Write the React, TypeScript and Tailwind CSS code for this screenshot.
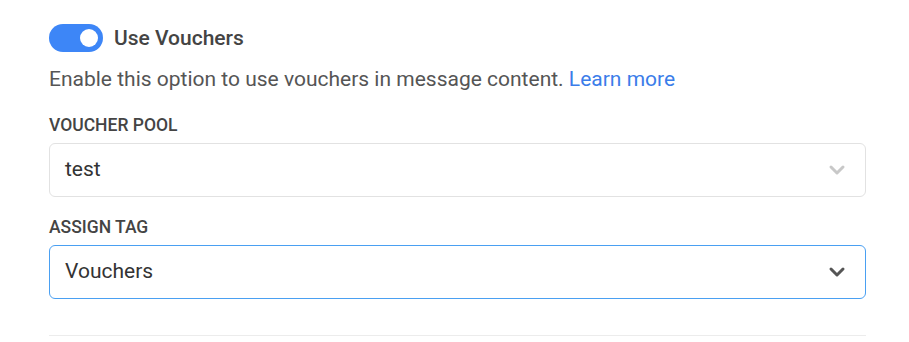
import { ChevronDown } from 'lucide-react';

function Toggle({ on }: { on: boolean }) {
  return (
    <button
      className={`flex h-[28px] w-[54px] items-center rounded-full px-[5px] ${
        on ? 'justify-end bg-[#3d86f7]' : 'justify-start bg-gray-300'
      }`}
    >
      <span className="block h-[18px] w-[18px] rounded-full bg-white" />
    </button>
  );
}

function Select({ value, focused }: { value: string; focused?: boolean }) {
  return (
    <div
      className={`flex h-[54px] items-center justify-between rounded-[6px] border bg-white pl-[15px] pr-[16px] ${
        focused ? 'border-[#4aa0f2]' : 'border-[#e2e2e2]'
      }`}
    >
      <span className="text-[21px] text-[#333]">{value}</span>
      <ChevronDown
        className={`h-[24px] w-[24px] ${focused ? 'text-[#555]' : 'text-[#c8c8c8]'}`}
        strokeWidth={3}
      />
    </div>
  );
}

export default function App() {
  return (
    <div className="min-h-screen bg-white font-['Roboto',sans-serif]">
      <div className="w-[817px] ml-[49px] pt-[24px]">
        <div className="flex items-center gap-[11px]">
          <Toggle on />
          <span className="text-[21px] font-medium leading-[28px] text-[#444]">Use Vouchers</span>
        </div>
        <p className="mt-[12px] text-[21px] leading-[30px] text-[#555]">
          Enable this option to use vouchers in message content.{' '}
          <a className="text-[#3b7de9]">Learn more</a>
        </p>
        <label className="mt-[20px] block text-[17.5px] font-medium uppercase leading-[22px] text-[#444]">
          Voucher Pool
        </label>
        <div className="mt-[7px]">
          <Select value="test" />
        </div>
        <label className="mt-[19px] block text-[17.5px] font-medium uppercase leading-[22px] text-[#444]">
          Assign Tag
        </label>
        <div className="mt-[7px]">
          <Select value="Vouchers" focused />
        </div>
        <div className="mt-[36px] h-px bg-[#ececec]" />
      </div>
    </div>
  );
}
